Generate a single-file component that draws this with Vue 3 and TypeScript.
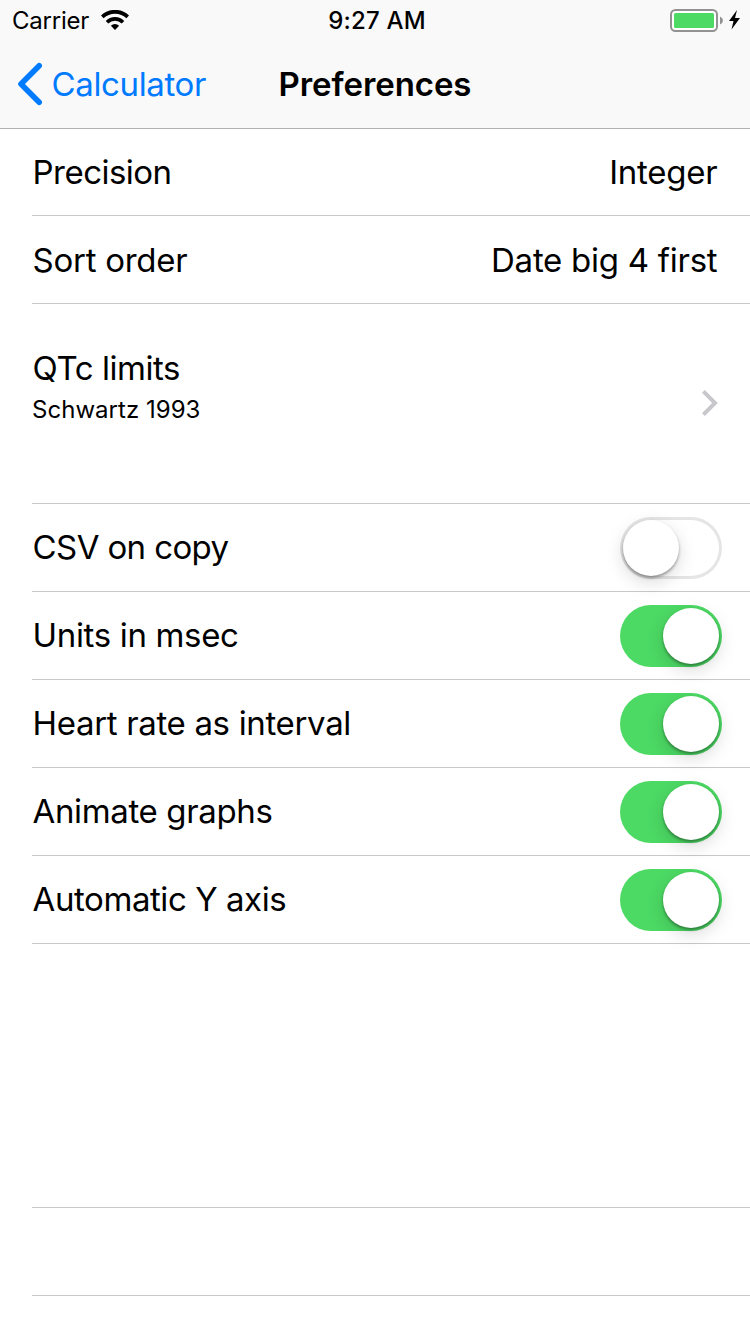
<script setup lang="ts">
interface Row {
  id: string
  label: string
  value?: string
  on?: boolean
}

const choices: Row[] = [
  { id: 'precision', label: 'Precision', value: 'Integer' },
  { id: 'sort', label: 'Sort order', value: 'Date big 4 first' },
]

const switches: Row[] = [
  { id: 'csv', label: 'CSV on copy', on: false },
  { id: 'units', label: 'Units in msec', on: true },
  { id: 'heart', label: 'Heart rate as interval', on: true },
  { id: 'animate', label: 'Animate graphs', on: true },
  { id: 'axis', label: 'Automatic Y axis', on: true },
]
</script>

<template>
  <div class="screen">
    <header class="top">
      <div class="status">
        <div class="carrier">
          <span class="carrier-name">Carrier</span>
          <svg class="wifi" width="28" height="20" viewBox="0 0 28 20">
            <path d="M1.3 6.9A18.3 18.3 0 0 1 26.7 6.9" fill="none" stroke="#000" stroke-width="3.8" />
            <path d="M6 12.2A11.2 11.2 0 0 1 22 12.2" fill="none" stroke="#000" stroke-width="3.6" />
            <path d="M9.9 15.8A5.8 5.8 0 0 1 18.1 15.8L14 20Z" fill="#000" />
          </svg>
        </div>
        <span class="time">9:27 AM</span>
        <div class="power">
          <svg width="72" height="24" viewBox="0 0 72 24">
            <rect x="1" y="1" width="46" height="21" rx="4.5" fill="#fff" stroke="#929292" stroke-width="2" />
            <rect x="4" y="4" width="40" height="15" rx="1.6" fill="#4cd964" />
            <path d="M50 7.6Q53 9 53 11.5T50 15.4Z" fill="#929292" />
            <path d="M67 1L59 12H63.5L61.5 20.5L70 9H65Z" fill="#000" />
          </svg>
        </div>
      </div>
      <nav class="nav">
        <a class="back">
          <svg width="28" height="44" viewBox="0 0 28 44">
            <path d="M23.2 3.7L5 22L23.2 40.3" fill="none" stroke="#007aff" stroke-width="5.6" stroke-linecap="round" stroke-linejoin="round" />
          </svg>
          <span class="back-label">Calculator</span>
        </a>
        <h1 class="title">Preferences</h1>
      </nav>
    </header>

    <main class="list">
      <div v-for="row in choices" :key="row.id" class="row" :class="row.id">
        <span class="label">{{ row.label }}</span>
        <span class="value">{{ row.value }}</span>
      </div>
      <div class="row limits">
        <div class="stack">
          <span class="label">QTc limits</span>
          <span class="detail">Schwartz 1993</span>
        </div>
        <svg width="18" height="28" viewBox="0 0 18 28">
          <path d="M2.4 2.4L14 14L2.4 25.6" fill="none" stroke="#c7c7cc" stroke-width="4" />
        </svg>
      </div>
      <div v-for="row in switches" :key="row.id" class="row toggle" :class="row.id">
        <span class="label">{{ row.label }}</span>
        <span class="switch" :class="{ on: row.on }"><i class="knob"></i></span>
      </div>
      <div class="row blank"></div>
      <div class="row"></div>
    </main>
  </div>
</template>

<style>
body {
  background: #fff;
}
</style>

<style scoped>
.screen {
  box-sizing: border-box;
  width: 750px;
  height: 1334px;
  overflow: hidden;
  background: #fff;
  color: #000;
  font-family: Inter, "Liberation Sans", sans-serif;
  font-size: 33px;
  white-space: nowrap;
}
.top {
  position: relative;
  z-index: 1;
  height: 128px;
  background: #f9f9f9;
  box-shadow: 0 1px 0 #b2b2b2;
}
.status {
  display: grid;
  grid-template-columns: 1fr auto 1fr;
  align-items: center;
  height: 40px;
  font-size: 24px;
  line-height: 40px;
}
.carrier {
  display: flex;
  align-items: center;
  padding-left: 12px;
}
.carrier-name {
  width: 89px;
  padding-top: 2px;
  line-height: 38px;
  letter-spacing: -0.22px;
}
.time {
  padding-top: 2px;
  line-height: 38px;
  font-weight: 500;
  margin-left: 4px;
  letter-spacing: 0.18px;
}
.power {
  display: flex;
  justify-content: flex-end;
  padding: 2px 8px 0 0;
}
.nav {
  display: grid;
  grid-template-columns: 1fr auto 1fr;
  align-items: center;
  height: 88px;
}
.back {
  display: flex;
  align-items: center;
  padding-left: 16px;
  color: #007aff;
}
.back-label {
  margin-left: 7.5px;
  letter-spacing: -0.36px;
}
.title {
  margin: 0;
  font-size: 33px;
  font-weight: 600;
  letter-spacing: -0.08px;
}
.row {
  box-sizing: border-box;
  display: flex;
  align-items: center;
  justify-content: space-between;
  height: 88px;
  margin-left: 32px;
  padding-right: 32px;
  line-height: 40px;
  background: linear-gradient(#c8c7cc, #c8c7cc) left bottom / 100% 1px no-repeat;
}
.label {
  padding-left: 0.6px;
}
.value {
  padding-right: 0.6px;
  letter-spacing: -0.26px;
}
.precision .label {
  letter-spacing: -0.55px;
}
.sort .label {
  letter-spacing: -0.27px;
}
.csv .label {
  letter-spacing: -0.62px;
}
.units .label {
  letter-spacing: -0.34px;
}
.heart .label {
  letter-spacing: -0.34px;
}
.animate .label {
  letter-spacing: -0.37px;
}
.axis .label {
  letter-spacing: -0.43px;
}
.toggle .label {
  padding-bottom: 2px;
}
.limits {
  height: 200px;
}
.limits .label {
  letter-spacing: -0.44px;
}
.limits svg {
  margin: 0 -1px 2px 0;
}
.stack {
  display: flex;
  flex-direction: column;
  margin-top: -32px;
}
.detail {
  margin-top: 4px;
  font-size: 24px;
  line-height: 36px;
  letter-spacing: 0.03px;
}
.switch {
  box-sizing: border-box;
  display: flex;
  width: 102px;
  height: 62px;
  margin-right: -4px;
  padding: 3px;
  border-radius: 31px;
  background: #fff;
  box-shadow: inset 0 0 0 3px #e5e5e5;
}
.switch.on {
  justify-content: flex-end;
  background: #4cd964;
  box-shadow: none;
}
.knob {
  width: 56px;
  height: 56px;
  border-radius: 50%;
  background: #fff;
  box-shadow: 0 6px 18px rgba(0, 0, 0, 0.15), 0 2px 3px rgba(0, 0, 0, 0.35);
}
.blank {
  height: 264px;
}
</style>
